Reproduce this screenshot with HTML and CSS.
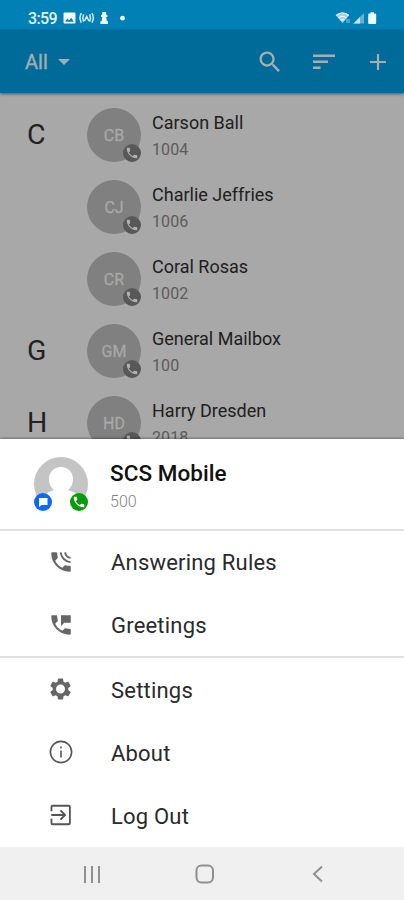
FILE: index.html
```
<!DOCTYPE html>
<html lang="en">
<head>
<meta charset="utf-8">
<title>Contacts</title>
<link rel="stylesheet" href="styles.css">
</head>
<body>
<svg width="0" height="0" class="defs">
  <symbol id="phone" viewBox="0 0 24 24"><path d="M6.62 10.79c1.44 2.83 3.76 5.14 6.59 6.59l2.2-2.2c.27-.27.67-.36 1.02-.24 1.12.37 2.33.57 3.57.57.55 0 1 .45 1 1V20c0 .55-.45 1-1 1-9.39 0-17-7.61-17-17 0-.55.45-1 1-1h3.5c.55 0 1 .45 1 1 0 1.25.2 2.45.57 3.57.11.35.03.74-.25 1.02l-2.2 2.2z"/></symbol>
</svg>
<div class="screen">
  <header class="status">
    <span class="time">3:59</span>
    <svg class="notif" width="62" height="14" viewBox="0 0 62 14">
      <path fill-rule="evenodd" d="M1.500 1.500h10q1 0 1 1v9q0 1-1 1h-10q-1 0-1-1v-9q0-1 1-1zM2.200 10.800h8.600L8.200 6.700 6 9.400 4.300 7.600z"/>
      <g fill="none" stroke="#d9edf5" stroke-width="1.500"><path d="M18.300 2.200q-2.600 4.700 0 9.400M20.600 3.200q-1.600 3.700 0 7.400M29 2.200q2.600 4.700 0 9.400M26.700 3.200q1.600 3.700 0 7.400M21.500 10l2.200-4.500 2.200 4.500"/></g>
      <path d="M39.200 1h4v3h1.200v1.900h-1.200l.6 4.400h1.200v2.700h-7.600v-2.700h1.200l.6-4.400h-1.200V4h1.200z"/>
      <circle cx="59.500" cy="7.200" r="2.400"/>
    </svg>
    <svg class="signal" width="44" height="14" viewBox="0 0 44 14">
      <path d="M1 4.500Q7.500-1 14 4.500L7.500 12z" fill="#a9d2e4"/>
      <path d="M1 4.500Q7.500-1 14 4.500M3.500 7q4-3.300 8 0M5.700 9.300q1.800-1.300 3.600 0" fill="none" stroke="#e8f5fa" stroke-width="1.200"/>
      <path d="M12 8v4M14 12V8" stroke="#8fc5dc" fill="none"/>
      <path d="M18.500 12.500L29 2v10.500z" fill="#65afcf"/><path d="M18.500 12.500L25 6v6.500z" fill="#c7e3ee"/>
      <path d="M35.500 1.200h3.500v1.300h1.200q1 0 1 1v8.500q0 1-1 1h-6q-1 0-1-1V3.500q0-1 1-1h1.300z"/>
    </svg>
  </header>
  <nav class="bar">
    <span class="filter">All</span>
    <svg class="caret" width="12" height="6" viewBox="0 0 12 6"><path d="M0 0h12L6 6z"/></svg>
    <svg class="search" width="28" height="28" viewBox="0 0 24 24"><path d="M15.500 14h-.79l-.28-.27C15.410 12.590 16 11.110 16 9.500 16 5.910 13.090 3 9.500 3S3 5.910 3 9.500 5.910 16 9.500 16c1.610 0 3.090-.59 4.230-1.570l.27.28v.79l5 4.990L20.490 19l-4.990-5zm-6 0C7.010 14 5 11.990 5 9.500S7.010 5 9.500 5 14 7.010 14 9.500 11.990 14 9.500 14z"/></svg>
    <svg class="sort" width="22" height="16" viewBox="0 0 22 16"><path d="M0 .5h22v2.600H0zM0 6.500h15v2.600H0zM0 12.500h7.500v2.600H0z"/></svg>
    <svg class="add" width="16" height="16" viewBox="0 0 16 16"><path d="M6.900 0h2.200v6.900H16v2.200H9.100V16H6.900V9.100H0V6.900h6.900z"/></svg>
  </nav>
  <main class="contacts">
    <div class="row"><b class="letter">C</b><div class="avatar">CB<i class="badge"><svg><use href="#phone"/></svg></i></div><div class="who"><span class="name">Carson Ball</span><span class="ext">1004</span></div></div>
    <div class="row"><b class="letter"></b><div class="avatar">CJ<i class="badge"><svg><use href="#phone"/></svg></i></div><div class="who"><span class="name">Charlie Jeffries</span><span class="ext">1006</span></div></div>
    <div class="row"><b class="letter"></b><div class="avatar">CR<i class="badge"><svg><use href="#phone"/></svg></i></div><div class="who"><span class="name">Coral Rosas</span><span class="ext">1002</span></div></div>
    <div class="row"><b class="letter">G</b><div class="avatar">GM<i class="badge"><svg><use href="#phone"/></svg></i></div><div class="who"><span class="name">General Mailbox</span><span class="ext">100</span></div></div>
    <div class="row"><b class="letter">H</b><div class="avatar">HD<i class="badge"><svg><use href="#phone"/></svg></i></div><div class="who"><span class="name">Harry Dresden</span><span class="ext">2018</span></div></div>
  </main>
  <section class="sheet">
    <div class="profile">
      <svg class="me" width="54" height="56" viewBox="0 0 54 56">
        <circle cx="27" cy="27" r="27" fill="#c4c4c4"/>
        <path d="M27 10c-7 0-12 5-12 12 0 5 2 8.500 5 11-6 2-12 5-15 10l-5 13h54l-5-13c-3-5-9-8-15-10 3-2.500 5-6 5-11 0-7-5-12-12-12z" fill="#fff"/>
        <circle cx="9" cy="45" r="9" fill="#0b69f5"/>
        <path d="M5 41h8.500v7H7.500L5 50.200z" fill="#fff"/>
        <circle cx="45" cy="45" r="9" fill="#089b08"/>
        <use href="#phone" x="38" y="38" width="14" height="14" fill="#fff"/>
      </svg>
      <div class="owner"><span class="title">SCS Mobile</span><span class="num">500</span></div>
    </div>
    <ul class="menu first">
      <li><svg viewBox="0 0 24 24"><use href="#phone"/><path d="M11.700 3.200Q13 11 20.800 12.300M15.800 3.200Q16.300 7.700 20.800 8.200" fill="none" stroke="#666" stroke-width="1.700"/></svg><span>Answering Rules</span></li>
      <li><svg viewBox="0 0 24 24"><use href="#phone"/><path d="M12 3v10l3-3h6V3z"/></svg><span>Greetings</span></li>
    </ul>
    <ul class="menu">
      <li><svg class="gear" viewBox="0 0 24 24"><path fill-rule="evenodd" d="M19.430 12.980c.04-.32.07-.64.07-.98s-.03-.66-.07-.98l2.110-1.650c.19-.15.24-.42.12-.64l-2-3.460c-.12-.22-.39-.3-.61-.22l-2.490 1c-.52-.4-1.080-.73-1.690-.98l-.38-2.650C14.460 2.180 14.250 2 14 2h-4c-.25 0-.46.18-.49.42l-.38 2.650c-.61.25-1.170.59-1.690.98l-2.490-1c-.23-.09-.49 0-.61.22l-2 3.460c-.13.22-.07.49.12.64l2.110 1.650c-.04.32-.07.65-.07.98s.03.66.07.98l-2.110 1.650c-.19.15-.24.42-.12.64l2 3.460c.12.22.39.3.61.22l2.490-1c.52.4 1.080.73 1.690.98l.38 2.650c.03.24.24.42.49.42h4c.25 0 .46-.18.49-.42l.38-2.650c.61-.25 1.170-.59 1.690-.98l2.490 1c.23.09.49 0 .61-.22l2-3.460c.12-.22.07-.49-.12-.64l-2.110-1.650zM12 16.300a4.300 4.300 0 1 1 0-8.600 4.300 4.300 0 0 1 0 8.600z"/></svg><span>Settings</span></li>
      <li><svg viewBox="0 0 24 24"><circle cx="12" cy="12" r="9.800" fill="none" stroke="#555" stroke-width="1.500"/><path d="M11.200 10.500h1.600V17h-1.600zM11.200 7h1.600v1.700h-1.600z"/></svg><span>About</span></li>
      <li><svg viewBox="0 0 24 24"><path d="M3.200 8.500v-4q0-1 1-1h15q1 0 1 1v15q0 1-1 1h-15q-1 0-1-1v-4M3 12h12.500M11.500 7.700l4.300 4.300-4.300 4.300" fill="none" stroke="#555" stroke-width="1.700"/></svg><span>Log Out</span></li>
    </ul>
  </section>
  <footer class="keys">
    <svg width="18" height="18" viewBox="0 0 18 18"><path d="M2 1v17M9 1v17M16 1v17"/></svg>
    <svg width="20" height="20" viewBox="0 0 20 20"><rect x="1.500" y="1.500" width="16.500" height="17" rx="5"/></svg>
    <svg width="12" height="18" viewBox="0 0 12 18"><path d="M10 1.500L2 9l8 7.500"/></svg>
  </footer>
</div>
</body>
</html>
```
FILE: styles.css
```
* { box-sizing: border-box; }
body { margin: 0; font-family: Roboto, "Liberation Sans", sans-serif; }
svg { display: block; flex: none; }
.defs { position: absolute; }
.screen { width: 404px; height: 900px; overflow: hidden; display: flex; flex-direction: column; background: #a8a8a8; }
.status { height: 30px; flex: none; background: #0080b5; display: flex; align-items: flex-start; padding: 11px 25px 0 28px; color: #e6f4fa; }
.status svg { fill: #f2fafd; }
.time { width: 35px; font-size: 16px; line-height: 16px; letter-spacing: -.6px; font-weight: 500; }
.signal { margin-left: auto; }
.bar { height: 63px; flex: none; background: #006b98; display: flex; align-items: center; padding: 0 18px 0 25px; color: #a2adb2; position: relative; box-shadow: 0 1px 3px rgba(0,0,0,.5); }
.bar svg { fill: #a4aeb2; }
.filter { font-size: 20px; width: 33px; -webkit-text-stroke: .4px #a2adb2; }
.search { margin-left: auto; margin-right: 29px; }
.sort { margin-right: 35px; }
.contacts { height: 346px; flex: none; overflow: hidden; padding-top: 6px; }
.row { height: 72px; display: flex; align-items: center; padding-left: 27px; }
.letter { width: 60px; padding-bottom: 2px; font-size: 28.500px; font-weight: 400; color: #222; }
.avatar { width: 54px; height: 54px; border-radius: 50%; background: #808080; color: #a8a8a8; display: flex; align-items: center; justify-content: center; font-size: 16px; position: relative; -webkit-text-stroke: .3px #a8a8a8; }
.badge { position: absolute; right: 0; bottom: 0; width: 18px; height: 18px; border-radius: 50%; background: #585858; display: grid; place-items: center; }
.badge svg { width: 14px; height: 14px; fill: #b0b0b0; }
.who { margin-left: 11px; padding-top: 3px; display: flex; flex-direction: column; }
.name { font-size: 18px; line-height: 26px; color: #202020; white-space: nowrap; }
.ext { font-size: 16px; line-height: 27px; letter-spacing: .1px; color: #5c5c5c; }
.sheet { height: 408px; flex: none; background: #fff; position: relative; box-shadow: 0 0 3px rgba(0,0,0,.6); }
.profile { height: 92px; padding: 18px 0 0 34px; display: flex; border-bottom: 2px solid #e0e0e0; }
.owner { margin-left: 22px; display: flex; flex-direction: column; }
.title { font-size: 22.500px; line-height: 33px; font-weight: 500; letter-spacing: .05px; color: #111; }
.num { font-size: 16px; line-height: 23px; color: #858585; font-weight: 300; }
.menu { list-style: none; margin: 0; padding: 0; }
.menu.first { height: 127px; border-bottom: 2px solid #e0e0e0; }
.menu li { height: 63px; display: flex; align-items: center; padding-left: 48px; }
.menu svg { width: 26px; height: 26px; fill: #666; margin-bottom: 2px; }
.menu .gear { width: 25px; margin-right: 1px; }
.menu span { margin-left: 37px; padding-top: 1px; font-size: 22px; letter-spacing: .2px; color: #2a2a2a; }
.menu.first span { padding-top: 0; }
.keys { height: 53px; flex: none; background: #f0f0f0; display: flex; align-items: center; padding-left: 83px; position: relative; }
.keys svg { fill: none; stroke: #909090; stroke-width: 2; }
.keys svg:nth-child(2) { margin-left: 94px; }
.keys svg:nth-child(3) { margin-left: 97px; }
```
